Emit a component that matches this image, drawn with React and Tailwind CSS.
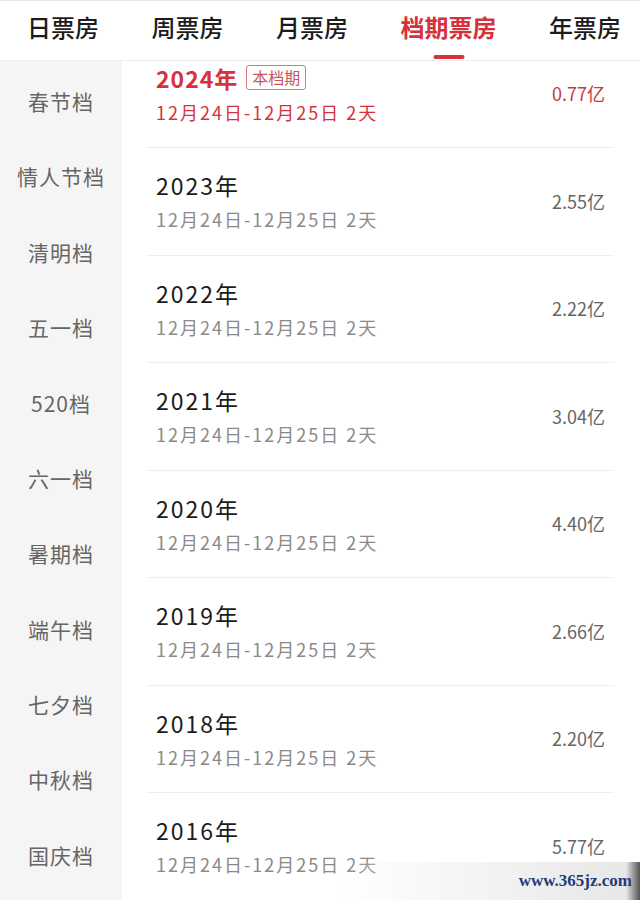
import React, { useState } from 'react';

const tabs = ['日票房', '周票房', '月票房', '档期票房', '年票房'];

const seasons = ['春节档', '情人节档', '清明档', '五一档', '520档', '六一档', '暑期档', '端午档', '七夕档', '中秋档', '国庆档'];

const rows = [
  { year: '2024', value: '0.77', current: true },
  { year: '2023', value: '2.55' },
  { year: '2022', value: '2.22' },
  { year: '2021', value: '3.04' },
  { year: '2020', value: '4.40' },
  { year: '2019', value: '2.66' },
  { year: '2018', value: '2.20' },
  { year: '2016', value: '5.77' },
];

const font = { fontFamily: '"Noto Sans CJK SC", "Noto Sans", sans-serif' };

export default function App() {
  const [activeTab, setActiveTab] = useState(3);
  const [activeSeason, setActiveSeason] = useState(-1);

  return (
    <div className="relative w-[640px] h-[900px] overflow-hidden bg-white border-t border-[#e6e6e6]" style={font}>
      {/* Tabs */}
      <div className="relative z-10 h-[60px] bg-white border-b border-[#eeeeee] flex items-start justify-between pl-[27px] pr-[19px]">
        {tabs.map((t, i) => (
          <div
            key={t}
            onClick={() => setActiveTab(i)}
            className={`relative h-full pt-[9px] text-[24px] leading-[34px] cursor-pointer ${activeTab === i ? 'text-[#d7313c] font-bold' : 'text-[#1c1c1c] font-medium'}`}
          >
            {t}
            {activeTab === i && (
              <span className="absolute left-1/2 -translate-x-1/2 bottom-[1px] w-[31px] h-[4px] rounded-full bg-[#d7313c]" />
            )}
          </div>
        ))}
      </div>

      <div className="flex h-[840px]">
        {/* Season sidebar */}
        <div className="w-[122px] shrink-0 bg-[#f5f5f5] pt-[3px]">
          {seasons.map((s, i) => (
            <div
              key={s}
              onClick={() => setActiveSeason(i)}
              className="h-[75.4px] flex items-center justify-center text-[21px] tracking-[1px] text-[#666666] cursor-pointer"
            >
              {s}
            </div>
          ))}
        </div>

        {/* Year list */}
        <div className="flex-1 overflow-hidden">
          <div className="-mt-[20.5px]">
            {rows.map(r => (
              <div key={r.year} className="ml-[25px] mr-[26px] h-[107.5px] border-b border-[#eeeeee] pl-[9px] pr-[9px] flex items-center justify-between">
                <div className="self-start pt-[22px]">
                  <div className="flex items-center gap-[8px] h-[30px]">
                    <span className={`text-[23px] leading-[30px] ${r.current ? 'text-[#d7313c] font-bold tracking-[1px]' : 'text-[#1c1c1c] tracking-[2px]'}`}>
                      {r.year}年
                    </span>
                    {r.current && (
                      <span className="border border-[#d27a80] rounded-[3px] px-[5px] text-[16px] leading-[23px] text-[#c9545c]">
                        本档期
                      </span>
                    )}
                  </div>
                  <div className={`mt-[7px] text-[18px] leading-[24px] tracking-[2px] ${r.current ? 'text-[#d7313c]' : 'text-[#8a8a8a]'}`}>
                    12月24日-12月25日 2天
                  </div>
                </div>
                <div className={`text-[18px] ${r.current ? 'text-[#c73a44]' : 'text-[#666666]'}`}>
                  {r.value}亿
                </div>
              </div>
            ))}
          </div>
        </div>
      </div>

      {/* watermark over the bottom */}
      <div className="absolute right-0 bottom-0 w-[300px] h-[38px] bg-gradient-to-r from-transparent via-[#f3f3f3] to-[#e6e6e6] flex items-center justify-end pr-[8px]">
        <span className="text-[17px] font-bold text-[#1f3c7a]" style={{ fontFamily: '"Liberation Serif", serif' }}>
          www.365jz.com
        </span>
      </div>
      <div className="absolute right-0 bottom-0 w-[14px] h-[38px] bg-gradient-to-r from-transparent to-[#555555]" />
    </div>
  );
}
